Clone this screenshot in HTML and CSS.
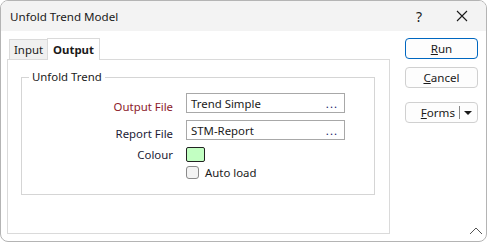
FILE: index.html
```html
<!DOCTYPE html>
<html lang="en">
<head>
    <meta charset="UTF-8">
    <title>Unfold Trend Model</title>
    <link rel="stylesheet" href="styles.css">
</head>
<body>
    <div class="window">
        <div class="titlebar">
            <span class="title">Unfold Trend Model</span>
            <span class="help">?</span>
            <svg class="close" width="12" height="12" viewBox="0 0 12 12">
                <path d="M1 1 L11 11 M11 1 L1 11" stroke="#1a1a1a" stroke-width="1.1" fill="none"/>
            </svg>
        </div>
        <div class="main">
            <div class="tabs">
                <div class="tabstrip">
                    <div class="tab">Input</div>
                    <div class="tab active">Output</div>
                </div>
                <div class="pane">
                    <div class="group">
                        <span class="legend">Unfold Trend</span>
                        <div class="form">
                            <label class="req">Output File</label>
                            <div class="field"><span>Trend Simple</span><span class="dots">...</span></div>
                            <label>Report File</label>
                            <div class="field"><span>STM-Report</span><span class="dots">...</span></div>
                            <label>Colour</label>
                            <div class="swatch"></div>
                            <span></span>
                            <div class="check"><span class="box"></span>Auto load</div>
                        </div>
                    </div>
                </div>
            </div>
            <div class="buttons">
                <button class="btn default"><u>R</u>un</button>
                <button class="btn"><u>C</u>ancel</button>
                <button class="btn forms"><span class="forms-label"><u>F</u>orms</span><span class="sep"></span><span class="arrow"></span></button>
            </div>
        </div>
        <svg class="grip" width="14" height="8" viewBox="0 0 14 8">
            <path d="M1 7 L7 1 L13 7" stroke="#555" stroke-width="1" fill="none"/>
        </svg>
    </div>
</body>
</html>
```

FILE: styles.css
```css
body {
    margin: 0;
    padding: 0;
    background: #ffffff;
    font-family: "Noto Sans", "Open Sans", sans-serif;
    font-size: 11.4px;
    color: #1a1a1a;
}
.window {
    position: relative;
    width: 487px;
    height: 242px;
    box-sizing: border-box;
    border: 1px solid #b4b4b4;
    border-radius: 8px;
    overflow: hidden;
    background: #ffffff;
}
.titlebar {
    height: 30px;
    display: flex;
    align-items: center;
    background: #f3f3f3;
    padding-left: 9px;
}
.title {
    flex: 1;
    font-size: 11.6px;
    color: #1a1a1a;
}
.help {
    font-size: 14px;
    margin-right: 34px;
}
.close {
    margin-right: 18px;
}
.main {
    display: flex;
    padding: 7px 0 0 6px;
}
.tabs {
    width: 383px;
}
.tabstrip {
    display: flex;
    align-items: flex-start;
    height: 22px;
    margin-bottom: -1px;
    padding-left: 2px;
    position: relative;
    z-index: 1;
}
.tab {
    height: 20px;
    box-sizing: border-box;
    margin-top: 1px;
    padding: 0 4px;
    border: 1px solid #dadada;
    border-bottom: none;
    border-right: none;
    background: #f0f0f0;
    line-height: 20px;
}
.tab.active {
    height: 22px;
    margin-top: 0;
    padding: 0 5px 0 5px;
    border-right: 1px solid #dadada;
    background: #ffffff;
    font-weight: bold;
    line-height: 22px;
}
.pane {
    height: 175px;
    box-sizing: border-box;
    border: 1px solid #dadada;
    background: #ffffff;
    padding: 17px 0 0 13px;
}
.group {
    position: relative;
    width: 354px;
    height: 118px;
    box-sizing: border-box;
    border: 1px solid #d5d5d5;
}
.legend {
    position: absolute;
    top: -9px;
    left: 7px;
    padding: 0 3px;
    background: #ffffff;
    line-height: 16px;
}
.form {
    display: grid;
    grid-template-columns: 151px 159px;
    column-gap: 13px;
    align-items: center;
    padding-top: 15px;
}
.form label {
    text-align: right;
    color: #1c1c36;
}
.form label.req {
    color: #8b1a2b;
}
.field {
    height: 20px;
    box-sizing: border-box;
    border: 1px solid #a8a8a8;
    display: flex;
    align-items: center;
    justify-content: space-between;
    padding: 0 6px 0 4px;
    margin-bottom: 7px;
    color: #1a1a1a;
}
.dots {
    color: #1a1a6a;
    letter-spacing: 1px;
}
.swatch {
    width: 19px;
    height: 15px;
    box-sizing: border-box;
    border: 1px solid #222222;
    border-radius: 2px;
    background: #c2ffc2;
}
.check {
    display: flex;
    align-items: center;
    margin-top: 3px;
}
.box {
    width: 13px;
    height: 13px;
    box-sizing: border-box;
    border: 1px solid #8a8a8a;
    border-radius: 3px;
    background: #f3f3f3;
    margin-right: 6px;
}
.buttons {
    display: flex;
    flex-direction: column;
    margin-left: 15px;
}
.btn {
    width: 73px;
    height: 21px;
    box-sizing: border-box;
    border: 1px solid #d0d0d0;
    border-radius: 4px;
    background: #fdfdfd;
    font-family: inherit;
    font-size: 11.6px;
    color: #1a1a1a;
    padding: 0;
    margin-bottom: 8px;
}
.btn.default {
    border-color: #0067c0;
}
.btn.forms {
    margin-top: 6px;
    display: flex;
    align-items: center;
    justify-content: flex-end;
    padding-right: 5px;
}
.forms-label {
    margin-right: 4px;
}
.sep {
    width: 1px;
    height: 13px;
    background: #888888;
    margin-right: 4px;
}
.arrow {
    width: 0;
    height: 0;
    border-left: 4px solid transparent;
    border-right: 4px solid transparent;
    border-top: 4px solid #1a1a1a;
}
.grip {
    position: absolute;
    right: 3px;
    bottom: 6px;
}
```
